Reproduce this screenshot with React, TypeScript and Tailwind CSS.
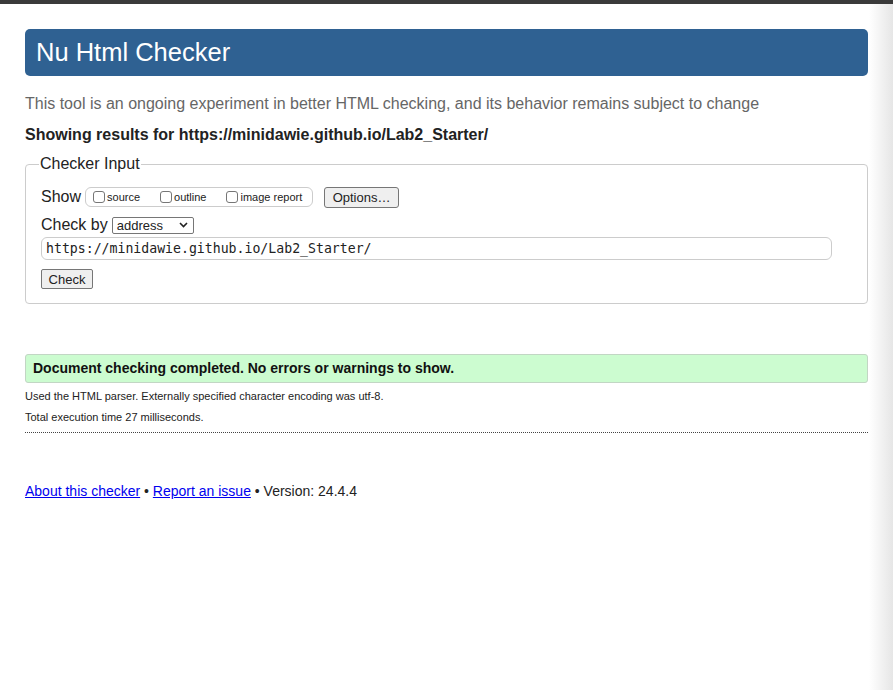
import React from 'react'

function Box() {
  return <span className="inline-block w-[12px] h-[12px] border border-[#767676] rounded-[3px] bg-white mr-[2px]" />
}

export default function App() {
  return (
    <div className="relative min-h-[690px] bg-white text-[#222] font-['Liberation_Sans',Arial,sans-serif]">
      <div className="h-[4px] bg-[#3a3a3a]" />

      <div className="px-[25px]">
        {/* Header */}
        <div className="mt-[25px] h-[47px] bg-[#2f6192] rounded-[5px] flex items-center pl-[11px]">
          <h1 className="text-white text-[25.5px] leading-none">Nu Html Checker</h1>
        </div>

        <p className="mt-[18px] text-[16px] leading-[20px] text-[#666]">
          This tool is an ongoing experiment in better HTML checking, and its behavior remains subject to change
        </p>
        <p className="mt-[11px] text-[16px] leading-[20px] font-bold text-[#222]">
          Showing results for https://minidawie.github.io/Lab2_Starter/
        </p>

        {/* Checker input */}
        <fieldset className="mt-[9px] border border-[#cccccc] rounded-[4px] px-[15px] pb-[14px]">
          <legend className="text-[16px] leading-[20px] -ml-[2px] px-[1px]">Checker Input</legend>

          <div className="mt-[12px] flex items-center h-[22px]">
            <span className="text-[16px] leading-[20px]">Show</span>
            <div className="ml-[4px] h-[20px] w-[228px] border border-[#cccccc] rounded-[6px] flex items-center pl-[7px] text-[11px] text-[#222]">
              <label className="flex items-center">
                <Box />
                source
              </label>
              <label className="flex items-center ml-[20px]">
                <Box />
                outline
              </label>
              <label className="flex items-center ml-[20px]">
                <Box />
                image report
              </label>
            </div>
            <button className="ml-[11px] h-[21px] w-[75px] border border-[#767676] rounded-[3px] bg-[#efefef] text-[13px] leading-none">
              Options…
            </button>
          </div>

          <div className="mt-[7px] flex items-center h-[20px]">
            <span className="text-[16px] leading-[20px]">Check by</span>
            <div className="ml-[4px] h-[17px] w-[82px] border border-[#767676] rounded-[2px] flex items-center justify-between pl-[4px] pr-[5px] text-[13px] leading-none">
              <span>address</span>
              <svg width="9" height="6" viewBox="0 0 9 6" fill="none">
                <path d="M1 1l3.5 3.5L8 1" stroke="#222" strokeWidth="1.6" />
              </svg>
            </div>
          </div>

          <div className="mt-[2px] h-[23px] w-[791px] border border-[#cccccc] rounded-[6px] flex items-center pl-[4px] font-['DejaVu_Sans_Mono','Liberation_Mono',monospace] text-[13.2px] text-[#222]">
            https://minidawie.github.io/Lab2_Starter/
          </div>

          <button className="mt-[9px] h-[20px] w-[52px] border border-[#767676] rounded-[2px] bg-[#efefef] text-[13px] leading-none block">
            Check
          </button>
        </fieldset>

        {/* Result */}
        <div className="mt-[50px] h-[29px] bg-[#ccfcd0] border border-[#c2d6c4] rounded-[3px] flex items-center pl-[7px]">
          <span className="text-[14px] font-bold text-[#111]">Document checking completed. No errors or warnings to show.</span>
        </div>
        <p className="mt-[6px] text-[11px] leading-[14px]">Used the HTML parser. Externally specified character encoding was utf-8.</p>
        <p className="mt-[7px] text-[11px] leading-[14px]">Total execution time 27 milliseconds.</p>
        <div className="mt-[8px] border-b border-dotted border-[#444]" />

        {/* Footer */}
        <p className="mt-[49px] text-[14px] leading-[18px] text-[#222]">
          <a href="#" className="text-[#0000ee] underline">About this checker</a>
          {' • '}
          <a href="#" className="text-[#0000ee] underline">Report an issue</a>
          {' • Version: 24.4.4'}
        </p>
      </div>

      <div className="absolute right-0 top-[4px] bottom-0 w-[24px] bg-gradient-to-r from-[#ffffff00] to-[#e6e6e6] pointer-events-none" />
    </div>
  )
}
